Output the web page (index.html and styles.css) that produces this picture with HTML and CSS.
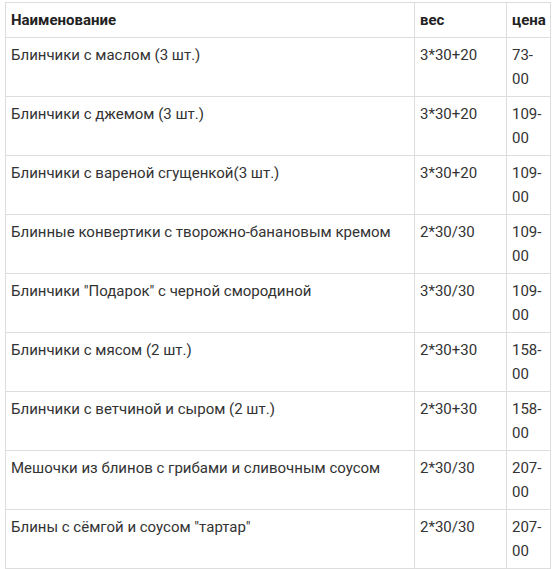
FILE: index.html
```html
<!DOCTYPE html>
<html lang="ru">
<head>
<meta charset="utf-8">
<link rel="stylesheet" href="styles.css">
</head>
<body>
<table class="menu">
  <colgroup>
    <col class="c-name">
    <col class="c-weight">
    <col class="c-price">
  </colgroup>
  <thead>
    <tr><th>Наименование</th><th>вес</th><th>цена</th></tr>
  </thead>
  <tbody>
    <tr><td>Блинчики с маслом (3 шт.)</td><td>3*30+20</td><td>73-00</td></tr>
    <tr><td>Блинчики с джемом (3 шт.)</td><td>3*30+20</td><td>109-00</td></tr>
    <tr><td>Блинчики с вареной сгущенкой(3 шт.)</td><td>3*30+20</td><td>109-00</td></tr>
    <tr><td>Блинные конвертики с творожно-банановым кремом</td><td>2*30/30</td><td>109-00</td></tr>
    <tr><td>Блинчики "Подарок" с черной смородиной</td><td>3*30/30</td><td>109-00</td></tr>
    <tr><td>Блинчики с мясом (2 шт.)</td><td>2*30+30</td><td>158-00</td></tr>
    <tr><td>Блинчики с ветчиной и сыром (2 шт.)</td><td>2*30+30</td><td>158-00</td></tr>
    <tr><td>Мешочки из блинов с грибами и сливочным соусом</td><td>2*30/30</td><td>207-00</td></tr>
    <tr><td>Блины с сёмгой и соусом "тартар"</td><td>2*30/30</td><td>207-00</td></tr>
  </tbody>
</table>
</body>
</html>
```
FILE: styles.css
```css
html, body {
  margin: 0;
  padding: 0;
  background: #fff;
}
body {
  padding: 2px 0 0 5px;
  font-family: Roboto, "Liberation Sans", sans-serif;
  font-size: 15px;
  line-height: 24px;
  color: #333;
}
.menu {
  border-collapse: collapse;
  table-layout: fixed;
  width: 545px;
}
.c-name { width: 409px; }
.c-weight { width: 92px; }
.c-price { width: 44px; }
.menu th,
.menu td {
  border: 1px solid #dddddd;
  padding: 5px 5px;
  text-align: left;
  vertical-align: top;
  height: 48px;
}
.menu th {
  height: 24px;
  font-weight: 700;
  color: #222;
}
```
